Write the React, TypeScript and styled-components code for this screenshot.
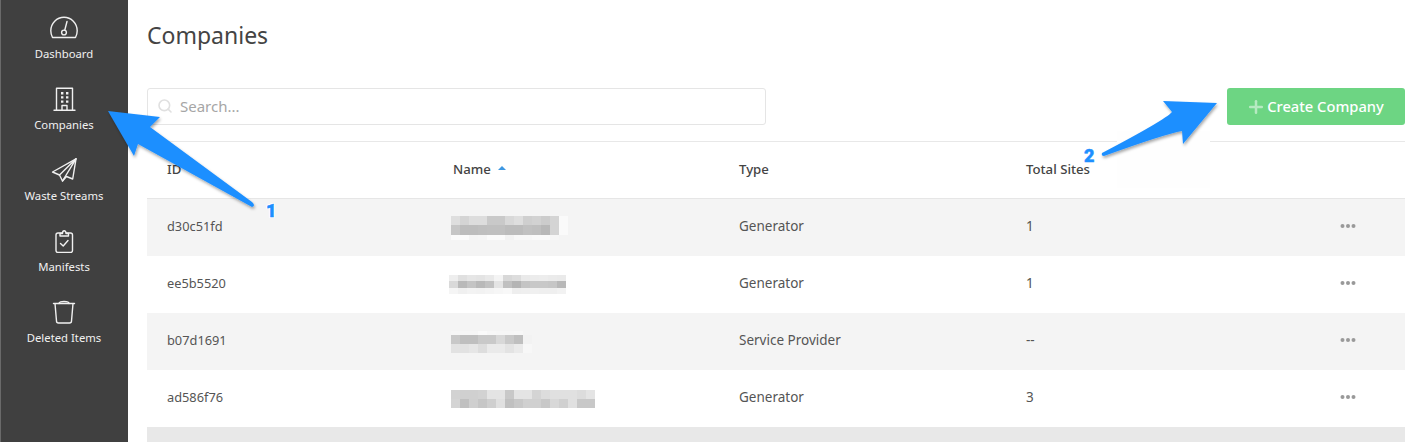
import React from 'react';
import styled, { createGlobalStyle } from 'styled-components';
import { Plus, Search } from 'lucide-react';

const GlobalStyle = createGlobalStyle`
  html, body {
    margin: 0;
    padding: 0;
    height: 100%;
    background: #fff;
    overflow: hidden;
  }
  body {
    font-family: "Noto Sans", "Open Sans", sans-serif;
  }
`;

const Page = styled.div`
  position: relative;
  display: flex;
  width: 1424px;
  height: 442px;
  overflow: hidden;
`;

const Sidebar = styled.nav`
  flex: none;
  box-sizing: border-box;
  width: 128px;
  padding-top: 9px;
  background: #404040;
  border-left: 1px solid #6a6a6a;
`;

const NavItem = styled.a`
  display: flex;
  flex-direction: column;
  align-items: center;
  height: 71px;
  margin-left: -1px;
  padding-top: 7px;
  box-sizing: border-box;
  color: #f0f0f0;
  font-size: 11.3px;
  line-height: 16px;
  svg {
    display: block;
    margin-bottom: 6px;
  }
`;

const Main = styled.main`
  flex: 1;
  padding: 0 19px;
  min-width: 0;
`;

const Title = styled.h1`
  margin: 0;
  padding-top: 19px;
  height: 88px;
  box-sizing: border-box;
  color: #444;
  font-size: 23px;
  line-height: 32px;
  font-weight: 400;
`;

const Toolbar = styled.div`
  display: flex;
  justify-content: space-between;
  height: 37px;
  margin-bottom: 16px;
`;

const SearchBox = styled.div`
  display: flex;
  align-items: center;
  gap: 7px;
  box-sizing: border-box;
  width: 619px;
  padding: 0 0 2px 9px;
  border: 1px solid #e5e5e5;
  border-radius: 3px;
  color: #a6a6a6;
  font-size: 15px;
`;

const CreateButton = styled.button`
  display: flex;
  align-items: center;
  justify-content: center;
  gap: 1px;
  width: 178px;
  padding: 0 0 2px;
  border: none;
  border-radius: 3px;
  background: #6dd583;
  color: #fff;
  font-family: inherit;
  font-size: 14.7px;
  font-weight: 500;
  svg {
    margin: 2px 0 0 -2px;
  }
`;

const Row = styled.div<{ $striped?: boolean }>`
  display: grid;
  grid-template-columns: 286px 286px 287px 1fr 40px;
  align-items: center;
  box-sizing: border-box;
  height: 57px;
  padding: 0 49px 4px 20px;
  background: ${(p) => (p.$striped ? '#f4f4f4' : '#fff')};
  color: #555;
  font-size: 13.5px;
`;

const HeadRow = styled(Row)`
  border-top: 1px solid #e8e8e8;
  border-bottom: 1px solid #e6e6e6;
  height: 58px;
  padding-bottom: 3px;
  color: #444;
  font-size: 13.2px;
  font-weight: 500;
`;

const HeadCell = styled.div`
  display: flex;
  align-items: center;
  gap: 7px;
`;

const IdCell = styled.div`
  font-size: 12.8px;
`;

const Caret = styled.span<{ $dir: 'up' | 'down' }>`
  width: 0;
  height: 0;
  margin-bottom: 2px;
  border-left: 4.5px solid transparent;
  border-right: 4.5px solid transparent;
  ${(p) =>
    p.$dir === 'up' ? 'border-bottom: 4px solid #3d97e2;' : 'border-top: 4px solid #aaa;'}
`;

const Footer = styled.div`
  height: 30px;
  background: #e8e8e8;
`;

const MosaicGrid = styled.div<{ $shift: number }>`
  display: flex;
  flex-direction: column;
  margin: 4px 0 0 ${(p) => p.$shift}px;
`;

const MosaicRow = styled.div<{ $h: number }>`
  display: flex;
  height: ${(p) => p.$h}px;
`;

const MosaicCell = styled.span`
  width: 9px;
  height: 100%;
  flex: none;
`;

const Dots = styled.svg`
  display: block;
  justify-self: end;
`;

const Annotations = styled.svg`
  position: absolute;
  left: 0;
  top: 0;
  pointer-events: none;
`;

const Step = styled.span<{ $x: number; $y: number }>`
  position: absolute;
  left: ${(p) => p.$x}px;
  top: ${(p) => p.$y}px;
  color: #1e8fff;
  font-family: "Roboto", "Liberation Sans", sans-serif;
  font-size: 18px;
  line-height: 18px;
  font-weight: 900;
  -webkit-text-stroke: 0.5px #1e8fff;
  text-shadow: 1px 0 0 #fff, -1px 0 0 #fff, 0 1px 0 #fff, 0 -1px 0 #fff, 1px 1px 0 #fff,
    -1px -1px 0 #fff, 1px -1px 0 #fff, -1px 1px 0 #fff;
`;

const icons = {
  gauge: (
    <>
      <path d="M4.5 21.5C3.4 19.5 2.8 17.2 2.8 14.8 2.8 7.4 8.8 1.3 16 1.3S29.2 7.4 29.2 14.8c0 2.4-.6 4.7-1.7 6.7Z" />
      <circle cx="16" cy="16.5" r="2.4" />
      <path d="M16.8 14L19 5.5" />
    </>
  ),
  building: (
    <>
      <path d="M6 23.2H27M8.5 23V1.2H24.5V23M14 23V18.5H19V23" />
      <path
        d="M13 5h2.4v2.4H13zM18 5h2.4v2.4H18zM13 9.2h2.4v2.4H13zM18 9.2h2.4v2.4H18zM13 13.4h2.4v2.4H13zM18 13.4h2.4v2.4H18z"
        fill="#f0f0f0"
        stroke="none"
      />
    </>
  ),
  plane: (
    <>
      <path d="M28 .8L4.5 14 11.5 17 14.5 23 18.5 18.5 24.7 21Z" />
      <path d="M28 .8L11.5 17M28 .8L14.5 23" />
    </>
  ),
  clipboard: (
    <>
      <rect x="8" y="4" width="16.5" height="19.5" rx="2" />
      <path d="M12 4.5V7H20.5V4.5H18C18 .8 14.5 .8 14.5 4.5Z" fill="#404040" />
      <path d="M12.5 14.5L15.2 17 20 11.5" />
    </>
  ),
  trash: (
    <>
      <path d="M5.5 3.5H26.5M7 3.5L8.5 21a2 2 0 0 0 2 2H21.5a2 2 0 0 0 2-2L25 3.5" />
      <path d="M11 3.5C11 .8 21 .8 21 3.5" />
    </>
  ),
};

const navItems: { label: string; icon: keyof typeof icons }[] = [
  { label: 'Dashboard', icon: 'gauge' },
  { label: 'Companies', icon: 'building' },
  { label: 'Waste Streams', icon: 'plane' },
  { label: 'Manifests', icon: 'clipboard' },
  { label: 'Deleted Items', icon: 'trash' },
];

type MosaicData = { shift: number; rows: { h: number; cells: string[] }[] };

const cells = (s: string) => s.split(' ').map((c) => `#${c}${c}${c}`);

const rows: { id: string; type: string; sites: string; mosaic: MosaicData }[] = [
  {
    id: 'd30c51fd',
    type: 'Generator',
    sites: '1',
    mosaic: {
      shift: -2,
      rows: [
        { h: 9, cells: cells('de d4 dd dd c9 c9 d8 de cf d2 cc d4 fa') },
        { h: 10, cells: cells('c6 bd bd bf c0 c0 bc bc c1 bf b8 d4 fa') },
        { h: 5, cells: cells('fb fc f5 f6 fb fb f3 f8 f8 fa fa f6 f4') },
      ],
    },
  },
  {
    id: 'ee5b5520',
    type: 'Generator',
    sites: '1',
    mosaic: {
      shift: -4,
      rows: [
        { h: 6, cells: cells('ee e0 e6 e4 e9 f4 d8 dd ea ec ed eb ea') },
        { h: 7, cells: cells('d9 b9 c4 b9 c2 e4 c0 b4 c4 c8 c8 c6 b8') },
        { h: 6, cells: cells('f5 f0 f3 f2 f4 f6 f8 ee ef f0 ef ef f2') },
      ],
    },
  },
  {
    id: 'b07d1691',
    type: 'Service Provider',
    sites: '--',
    mosaic: {
      shift: -2,
      rows: [
        { h: 4, cells: cells('f6 f6 f6 fa f7 f6 f6 f7 f4') },
        { h: 9, cells: cells('c8 bf bf c9 c9 d8 c9 bf f2') },
        { h: 9, cells: cells('e2 e2 e6 dd ea ea e3 ea f7') },
      ],
    },
  },
  {
    id: 'ad586f76',
    type: 'Generator',
    sites: '3',
    mosaic: {
      shift: -2,
      rows: [
        { h: 9, cells: cells('d2 d0 d0 d2 e4 e4 c8 e4 e4 d4 dc e0 e0 e0 dc e4') },
        { h: 9, cells: cells('d4 c0 cf c6 cf e0 c0 c8 d0 d0 c8 d8 d0 e0 c8 c8') },
      ],
    },
  },
];

const Mosaic: React.FC<{ data: MosaicData }> = ({ data }) => (
  <MosaicGrid $shift={data.shift}>
    {data.rows.map((r, i) => (
      <MosaicRow key={i} $h={r.h}>
        {r.cells.map((c, j) => (
          <MosaicCell key={j} style={{ background: c }} />
        ))}
      </MosaicRow>
    ))}
  </MosaicGrid>
);

const App: React.FC = () => (
  <Page>
    <GlobalStyle />
    <Sidebar>
      {navItems.map((item) => (
        <NavItem key={item.label}>
          <svg
            width="32"
            height="24"
            viewBox="0 0 32 24"
            fill="none"
            stroke="#f0f0f0"
            strokeWidth="1.4"
            strokeLinejoin="round"
            strokeLinecap="round"
          >
            {icons[item.icon]}
          </svg>
          {item.label}
        </NavItem>
      ))}
    </Sidebar>
    <Main>
      <Title>Companies</Title>
      <Toolbar>
        <SearchBox>
          <Search size={16} color="#e0e0e0" strokeWidth={2.4} />
          Search...
        </SearchBox>
        <CreateButton>
          <Plus size={20} color="#b6eac1" strokeWidth={3} />
          Create Company
        </CreateButton>
      </Toolbar>
      <HeadRow>
        <HeadCell>
          ID <Caret $dir="down" />
        </HeadCell>
        <HeadCell>
          Name <Caret $dir="up" />
        </HeadCell>
        <HeadCell>Type</HeadCell>
        <HeadCell>Total Sites</HeadCell>
      </HeadRow>
      {rows.map((row, i) => (
        <Row key={row.id} $striped={i % 2 === 0}>
          <IdCell>{row.id}</IdCell>
          <Mosaic data={row.mosaic} />
          <div>{row.type}</div>
          <div>{row.sites}</div>
          <Dots width="16" height="4" viewBox="0 0 16 4" fill="#999">
            <circle cx="2.5" cy="2" r="2" />
            <circle cx="8" cy="2" r="2" />
            <circle cx="13.5" cy="2" r="2" />
          </Dots>
        </Row>
      ))}
      <Footer />
    </Main>
    <Annotations width="1424" height="442" viewBox="0 0 1424 442">
      <defs>
        <filter id="arrowShadow" x="-10%" y="-10%" width="120%" height="120%">
          <feDropShadow dx="1" dy="2" stdDeviation="1.5" floodColor="#000" floodOpacity="0.35" />
        </filter>
      </defs>
      <rect x="1117" y="131" width="93" height="57" fill="#fefefe" />
      <path
        d="M108 111L160 117 150 127 252 202Q256 206 252 207L138 144 134 156Z"
        fill="#1e8fff"
        filter="url(#arrowShadow)"
      />
      <path
        d="M1217 103L1163 101 1172 112Q1165 120 1102 153 1101 156 1104 156 1165 134 1182 131L1183 144Z"
        fill="#1e8fff"
        filter="url(#arrowShadow)"
      />
    </Annotations>
    <Step $x={266} $y={202}>1</Step>
    <Step $x={1084} $y={147}>2</Step>
  </Page>
);

export default App;
